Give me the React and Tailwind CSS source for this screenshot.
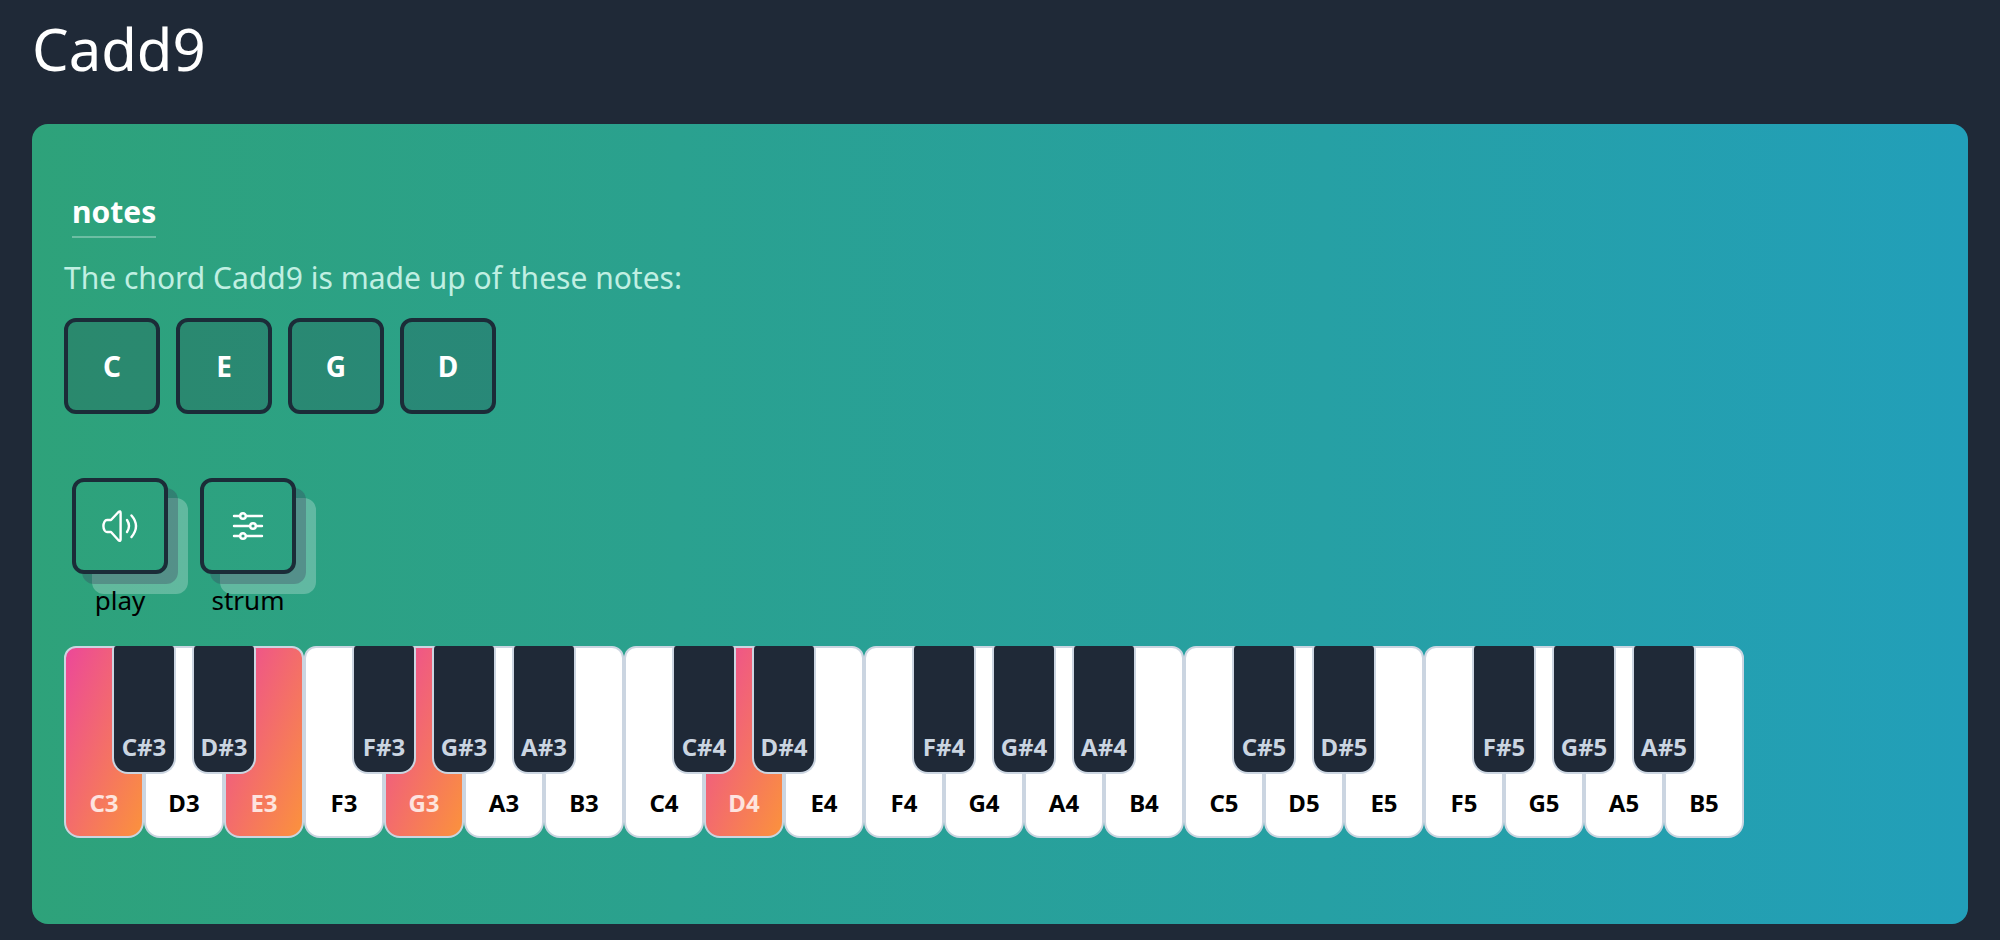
const blackOctave = ["C#", "D#", null, "F#", "G#", "A#", null];
const whiteOctave = ["C", "D", "E", "F", "G", "A", "B"];
const octaves = [3, 4, 5];

const chord = {
  name: "Cadd9",
  notes: ["C", "E", "G", "D"],
  keys: ["C3", "E3", "G3", "D4"],
};

const VolumeIcon = () => (
  <svg viewBox="0 0 36 32" className="w-9 h-8" fill="none" stroke="currentColor" strokeWidth="2.4" strokeLinecap="round" strokeLinejoin="round" aria-hidden="true">
    <path d="M9 10H5Q3.500 10 2.600 11.500Q.2 16 2.600 20.500Q3.500 22 5 22H9L16.500 30.200Q18.600 31.800 18.600 29.500V3Q18.600 .4 16.500 2Z" />
    <path d="M25 10Q29 16 25 22" />
    <path d="M29.500 5.500Q38.500 16 29.500 27" />
  </svg>
);

const SlidersIcon = () => (
  <svg viewBox="0 0 32 32" className="size-8" fill="none" stroke="currentColor" strokeWidth="2.4" strokeLinecap="round" aria-hidden="true">
    <path d="M2 6H8M14 6H30M2 16H18M24 16H30M2 26H8M14 26H30" />
    <circle cx="11" cy="6" r="2.8" />
    <circle cx="21" cy="16" r="2.8" />
    <circle cx="11" cy="26" r="2.8" />
  </svg>
);

const Note = ({ children }) => (
  <li className="flex size-24 items-center justify-center rounded-xl border-4 border-[#1b2c38] bg-[#1f2937]/20 text-[28px] font-bold text-white">
    {children}
  </li>
);

const SoundButton = ({ id, label, icon }) => (
  <div className="flex flex-col items-center">
    <button
      id={id}
      type="button"
      aria-labelledby={`${id}-label`}
      className="flex size-24 items-center justify-center rounded-xl border-4 border-[#1b2c38] text-white shadow-[10px_10px_0_rgba(60,60,90,0.32),20px_20px_0_rgba(255,255,255,0.25)]"
    >
      {icon}
    </button>
    <label id={`${id}-label`} htmlFor={id} className="relative mt-2 text-[26px] leading-9 text-black">{label}</label>
  </div>
);

const WhiteKey = ({ note, active }) => (
  <button
    type="button"
    className={
      "flex h-48 w-20 items-end justify-center rounded-t-xl rounded-b-2xl border-2 border-[#cbd5e1] pb-[17px] text-2xl font-bold " +
      (active ? "bg-linear-to-br/srgb from-[#ec4899] to-[#fb923c] text-white/80" : "bg-white text-black")
    }
  >
    {note}
  </button>
);

const BlackKey = ({ note }) => (
  <button
    type="button"
    className="absolute top-0 -right-8 z-10 flex h-32 w-16 items-end justify-center rounded-t rounded-b-2xl border-2 border-t-0 border-[#cbd5e1] bg-[#1f2937] pb-[9px] text-2xl font-bold text-[#cbd5e1]"
  >
    {note}
  </button>
);

const Piano = ({ active }) => (
  <div className="flex">
    {octaves.map((octave) =>
      whiteOctave.map((note, index) => (
        <div key={note + octave} className="relative">
          <WhiteKey note={note + octave} active={active.includes(note + octave)} />
          {blackOctave[index] && <BlackKey note={blackOctave[index] + octave} />}
        </div>
      ))
    )}
  </div>
);

const App = () => {
  return (
    <main className="min-h-screen bg-[#1f2937] px-8 pt-5 pb-4 font-['Noto_Sans',sans-serif]">
      <h1 className="text-[58px] leading-[58px] text-white">{chord.name}</h1>

      <section className="mt-[46px] rounded-2xl bg-linear-to-r/srgb from-[#2ea27a] to-[#229fb9] px-8 pt-[68px] pb-[86px]">
        <h2 className="ml-2 inline-block border-b-2 border-white/30 pb-1 text-3xl leading-10 font-bold text-white">notes</h2>
        <p className="mt-5 text-3xl leading-10 text-[#c0efe2]">The chord {chord.name} is made up of these notes:</p>

        <ul className="mt-5 flex gap-4">
          {chord.notes.map((note) => <Note key={note}>{note}</Note>)}
        </ul>

        <div className="mt-16 ml-2 flex gap-8">
          <SoundButton id="play" label="play" icon={<VolumeIcon />} />
          <SoundButton id="strum" label="strum" icon={<SlidersIcon />} />
        </div>

        <div className="mt-7">
          <Piano active={chord.keys} />
        </div>
      </section>
    </main>
  );
};

export default App;
